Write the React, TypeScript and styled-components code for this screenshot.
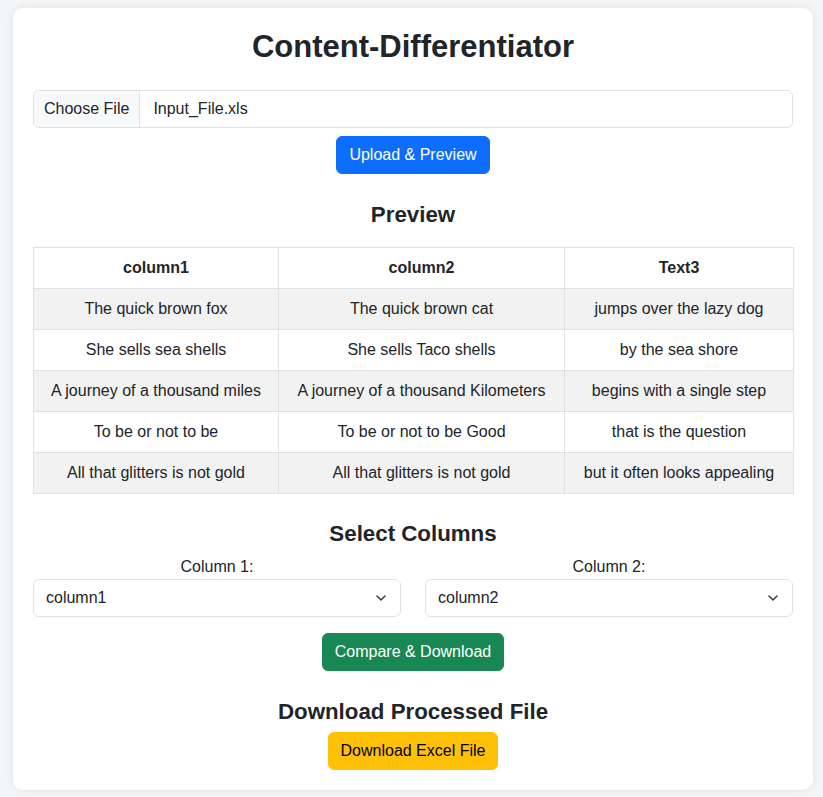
import React from "react";
import styled, { createGlobalStyle } from "styled-components";

const GlobalStyle = createGlobalStyle`
  body {
    margin: 0;
    padding: 8px 10px 7px 13px;
    background: #f4f5f7;
    font-family: "Liberation Sans", Arial, sans-serif;
    font-size: 16px;
    line-height: 1.5;
    color: #212529;
  }
  * {
    box-sizing: border-box;
  }
`;

const Card = styled.div`
  max-width: 800px;
  margin: 0 auto;
  background: #fff;
  border-radius: 10px;
  box-shadow: 0 0 10px rgba(0, 0, 0, 0.08);
  padding: 20px;
  text-align: center;
`;

const Title = styled.h1`
  margin: 0 0 24px;
  font-size: 31px;
  line-height: 38px;
  font-weight: 700;
`;

const SectionTitle = styled.h4<{ $before?: number; $after?: number }>`
  margin: ${(p) => p.$before ?? 26}px 0 ${(p) => p.$after ?? 7}px;
  font-size: 22.3px;
  line-height: 29px;
  font-weight: 700;
`;

const FileBox = styled.div`
  display: flex;
  align-items: stretch;
  height: 38px;
  border: 1px solid #dee2e6;
  border-radius: 6px;
  overflow: hidden;
  text-align: left;
`;

const FileButton = styled.span`
  padding: 6px 10px;
  background: #f8f9fa;
  border-right: 1px solid #dee2e6;
`;

const FileName = styled.span`
  padding: 6px 13px;
`;

const Button = styled.button<{ $variant: "primary" | "success" | "warning"; $top?: number }>`
  display: inline-block;
  margin-top: ${(p) => p.$top ?? 0}px;
  padding: 6px 12px;
  font-family: inherit;
  font-size: 16px;
  line-height: 24px;
  border-radius: 6px;
  border: 1px solid;
  cursor: pointer;
  ${(p) =>
    p.$variant === "primary"
      ? "background:#0d6efd;border-color:#0d6efd;color:#fff;"
      : p.$variant === "success"
      ? "background:#198754;border-color:#198754;color:#fff;"
      : "background:#ffc107;border-color:#ffc107;color:#000;"}
`;

const Table = styled.table`
  width: 100%;
  border-collapse: collapse;
  table-layout: fixed;
`;

const Cell = styled.td`
  border: 1px solid #dee2e6;
  padding: 8px;
  line-height: 24px;
  text-align: center;
  white-space: nowrap;
`;

const HeadCell = styled(Cell).attrs({ as: "th" })`
  font-weight: 700;
`;

const Row = styled.tr<{ $striped: boolean }>`
  background: ${(p) => (p.$striped ? "#f2f2f2" : "#fff")};
`;

const ColumnsGrid = styled.div`
  display: grid;
  grid-template-columns: 1fr 1fr;
  gap: 24px;
`;

const Field = styled.div`
  display: flex;
  flex-direction: column;
`;

const Label = styled.label`
  line-height: 24px;
`;

const SelectWrap = styled.div`
  position: relative;
`;

const Select = styled.select`
  width: 100%;
  height: 38px;
  appearance: none;
  padding: 6px 36px 6px 12px;
  font-family: inherit;
  font-size: 16px;
  line-height: 24px;
  color: #212529;
  background: #fff;
  border: 1px solid #dee2e6;
  border-radius: 6px;
`;

const Chevron = styled.svg`
  position: absolute;
  right: 15px;
  top: 16px;
  pointer-events: none;
`;

const rows = [
  ["The quick brown fox", "The quick brown cat", "jumps over the lazy dog"],
  ["She sells sea shells", "She sells Taco shells", "by the sea shore"],
  ["A journey of a thousand miles", "A journey of a thousand Kilometers", "begins with a single step"],
  ["To be or not to be", "To be or not to be Good", "that is the question"],
  ["All that glitters is not gold", "All that glitters is not gold", "but it often looks appealing"],
];

const columns = ["column1", "column2", "Text3"];

const ColumnSelect = ({ label, value }: { label: string; value: string }) => (
  <Field>
    <Label>{label}</Label>
    <SelectWrap>
      <Select defaultValue={value}>
        {columns.map((c) => (
          <option key={c} value={c}>
            {c}
          </option>
        ))}
      </Select>
      <Chevron width="10" height="6" viewBox="0 0 10 6">
        <path d="M1 1l4 4 4-4" fill="none" stroke="#343a40" strokeWidth="1.5" strokeLinecap="round" strokeLinejoin="round" />
      </Chevron>
    </SelectWrap>
  </Field>
);

export default function App() {
  return (
    <>
      <GlobalStyle />
      <Card>
        <Title>Content-Differentiator</Title>
        <FileBox>
          <FileButton>Choose File</FileButton>
          <FileName>Input_File.xls</FileName>
        </FileBox>
        <Button $variant="primary" $top={8}>
          Upload &amp; Preview
        </Button>

        <SectionTitle $after={18}>Preview</SectionTitle>
        <Table>
          <colgroup>
            <col style={{ width: 245 }} />
            <col style={{ width: 286 }} />
            <col style={{ width: 229 }} />
          </colgroup>
          <thead>
            <tr>
              {columns.map((c) => (
                <HeadCell key={c}>{c}</HeadCell>
              ))}
            </tr>
          </thead>
          <tbody>
            {rows.map((r, i) => (
              <Row key={i} $striped={i % 2 === 0}>
                {r.map((t, j) => (
                  <Cell key={j}>{t}</Cell>
                ))}
              </Row>
            ))}
          </tbody>
        </Table>

        <SectionTitle $before={25}>Select Columns</SectionTitle>
        <ColumnsGrid>
          <ColumnSelect label="Column 1:" value="column1" />
          <ColumnSelect label="Column 2:" value="column2" />
        </ColumnsGrid>
        <Button $variant="success" $top={16}>
          Compare &amp; Download
        </Button>

        <SectionTitle $after={6}>Download Processed File</SectionTitle>
        <Button $variant="warning">Download Excel File</Button>
      </Card>
    </>
  );
}
